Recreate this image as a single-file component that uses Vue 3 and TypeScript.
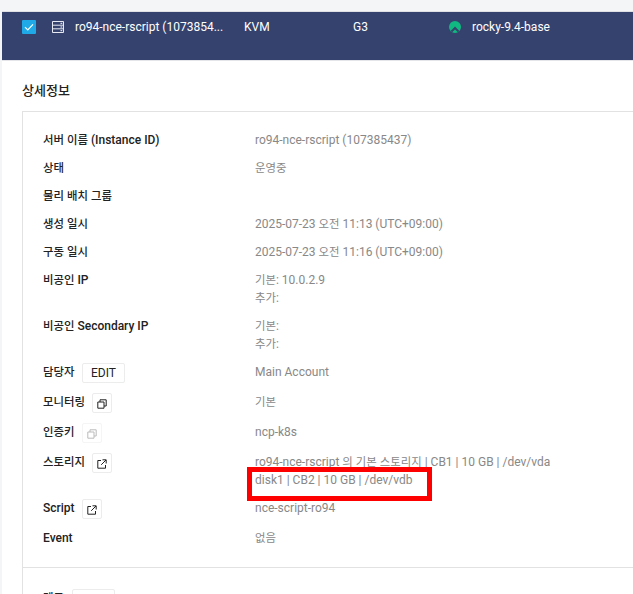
<script setup lang="ts">
interface Row {
  label: string
  values: string[]
  action?: 'edit' | 'copy' | 'copy-off' | 'link'
  mark?: boolean
}

const rows: Row[] = [
  { label: '서버 이름 (Instance ID)', values: ['ro94-nce-rscript (107385437)'] },
  { label: '상태', values: ['운영중'] },
  { label: '물리 배치 그룹', values: [''] },
  { label: '생성 일시', values: ['2025-07-23 오전 11:13 (UTC+09:00)'] },
  { label: '구동 일시', values: ['2025-07-23 오전 11:16 (UTC+09:00)'] },
  { label: '비공인 IP', values: ['기본: 10.0.2.9', '추가:'] },
  { label: '비공인 Secondary IP', values: ['기본:', '추가:'] },
  { label: '담당자', values: ['Main Account'], action: 'edit' },
  { label: '모니터링', values: ['기본'], action: 'copy' },
  { label: '인증키', values: ['ncp-k8s'], action: 'copy-off' },
  {
    label: '스토리지',
    values: ['ro94-nce-rscript 의 기본 스토리지 | CB1 | 10 GB | /dev/vda', 'disk1 | CB2 | 10 GB | /dev/vdb'],
    action: 'link',
    mark: true,
  },
  { label: 'Script', values: ['nce-script-ro94'], action: 'link' },
  { label: 'Event', values: ['없음'] },
]

// Korean runs are set slightly smaller than the Latin text around them.
function runs(text: string): { text: string; ko: boolean }[] {
  return text
    .split(/([\uAC00-\uD7A3]+)/)
    .filter((part) => part.length > 0)
    .map((part) => ({ text: part, ko: /[\uAC00-\uD7A3]/.test(part) }))
}
</script>

<template>
  <div class="page">
    <div class="strip"></div>
    <div class="selected">
      <span class="check">
        <svg width="14" height="14" viewBox="0 0 14 14"><path d="M3 7.2 5.8 10 11 4.3" fill="none" stroke="#fff" stroke-width="1.2" /></svg>
      </span>
      <svg class="server" width="12" height="12" viewBox="0 0 12 12">
        <path d="M.5.5h11v11H.5zM.5 4.2h11M.5 7.8h11" fill="none" stroke="#e6e9f2" stroke-width="1" />
        <path d="M8.5 2.3h1.8M8.5 6h1.8M8.5 9.7h1.8" stroke="#fff" stroke-width="1" />
      </svg>
      <span class="name">ro94-nce-rscript (1073854...</span>
      <span class="hyper">KVM</span>
      <span class="gen">G3</span>
      <svg class="logo" width="12" height="12" viewBox="0 0 12 12">
        <circle cx="6" cy="6" r="6" fill="#10b981" />
        <path d="M1.6 10 6 5.6l4.4 4.4-1.5 1.2L6 8.4l-2.9 2.8Z" fill="#36426e" />
      </svg>
      <span class="image">rocky-9.4-base</span>
    </div>
    <div class="body">
      <h2 class="title">상세정보</h2>
      <div class="card">
        <div class="rows">
          <div v-for="row in rows" :key="row.label" class="row">
            <div class="label">
              <span><span v-for="(r, i) in runs(row.label)" :key="i" :class="{ ko: r.ko }">{{ r.text }}</span></span>
              <button v-if="row.action === 'edit'" class="btn edit" type="button">EDIT</button>
              <button v-else-if="row.action" class="btn icon" :class="{ off: row.action === 'copy-off' }" type="button">
                <svg v-if="row.action === 'link'" width="10" height="10" viewBox="0 0 10 10" fill="none" stroke="currentColor">
                  <path d="M4 1.5H.8v7.7h7.7V6M5.5.8h3.7v3.7M9 1 4.2 5.8" />
                </svg>
                <svg v-else width="10" height="10" viewBox="0 0 10 10" fill="none" stroke="currentColor">
                  <path d="M.8 3h6.2v6.2H.8zM3 3V.8h6.2V7H7" />
                </svg>
              </button>
            </div>
            <div class="value">
              <div v-for="(line, i) in row.values" :key="i" class="line"><span v-for="(r, j) in runs(line)" :key="j" :class="{ ko: r.ko }">{{ r.text }}</span></div>
              <div v-if="row.mark" class="mark"></div>
            </div>
          </div>
        </div>
        <div class="memo">
          <span class="label-text ko">메모</span>
          <button class="btn edit" type="button">EDIT</button>
        </div>
      </div>
    </div>
  </div>
</template>

<style>
html, body { margin: 0; background: #fff; }
</style>

<style scoped>
.page {
  width: 633px;
  height: 594px;
  overflow: hidden;
  box-sizing: border-box;
  border-left: 2px solid #f4f5f7;
  font-family: Roboto, "Noto Sans CJK KR", sans-serif;
  font-size: 12px;
  line-height: 18px;
  background: #fff;
}
.ko { font-size: 11.4px; }
.strip {
  height: 11px;
  margin-left: -2px;
  background: #f4f5f7;
  border-bottom: 1px solid #dfe0e4;
}
.selected {
  display: flex;
  align-items: flex-start;
  height: 48px;
  background: #36426e;
  color: #fff;
  border-bottom: 1px solid #e4e5e8;
}
.check {
  display: flex;
  width: 14px;
  height: 14px;
  margin: 8px 0 0 20px;
  border-radius: 1px;
  background: #1fa9e6;
}
.server { margin: 9px 0 0 16px; flex: none; }
.name { width: 169px; margin: 6px 0 0 11px; white-space: nowrap; }
.hyper { width: 109px; margin-top: 6px; }
.gen { width: 96px; margin-top: 6px; }
.logo { margin-top: 9px; flex: none; }
.image { margin: 6px 0 0 11px; }
.body { padding-left: 20px; }
.title {
  margin: 21px 0 11px;
  font-size: 13px;
  font-weight: 500;
  line-height: 18px;
  color: #222;
}
.card {
  border: 1px solid #e2e2e2;
  border-right: 0;
  background: #fff;
}
.rows {
  display: flex;
  flex-direction: column;
  gap: 10px;
  padding: 19px 0 20px 20px;
  border-bottom: 1px solid #e2e2e2;
}
.row { display: flex; }
.label {
  display: flex;
  align-items: flex-start;
  gap: 7.5px;
  width: 212px;
  flex: none;
  font-weight: 500;
  color: #222;
}
.value { position: relative; color: #888; min-height: 18px; }
.line { min-height: 18px; white-space: nowrap; }
.mark {
  position: absolute;
  left: -8px;
  top: 14px;
  width: 175px;
  height: 24px;
  border: 5px solid #f00;
}
.btn {
  box-sizing: border-box;
  height: 20px;
  padding: 0;
  border: 1px solid #ececec;
  border-radius: 2px;
  background: #fff;
  color: #222;
  font: inherit;
  font-weight: 400;
  line-height: 18px;
}
.edit { width: 43px; }
.icon {
  display: flex;
  width: 20px;
  align-items: center;
  justify-content: center;
  padding-top: 2px;
}
.off { color: #bbb; border-color: #f5f5f5; }
.memo {
  display: flex;
  gap: 8px;
  padding: 21px 0 0 20px;
  align-items: flex-start;
}
.label-text { font-weight: 500; color: #222; }
</style>
